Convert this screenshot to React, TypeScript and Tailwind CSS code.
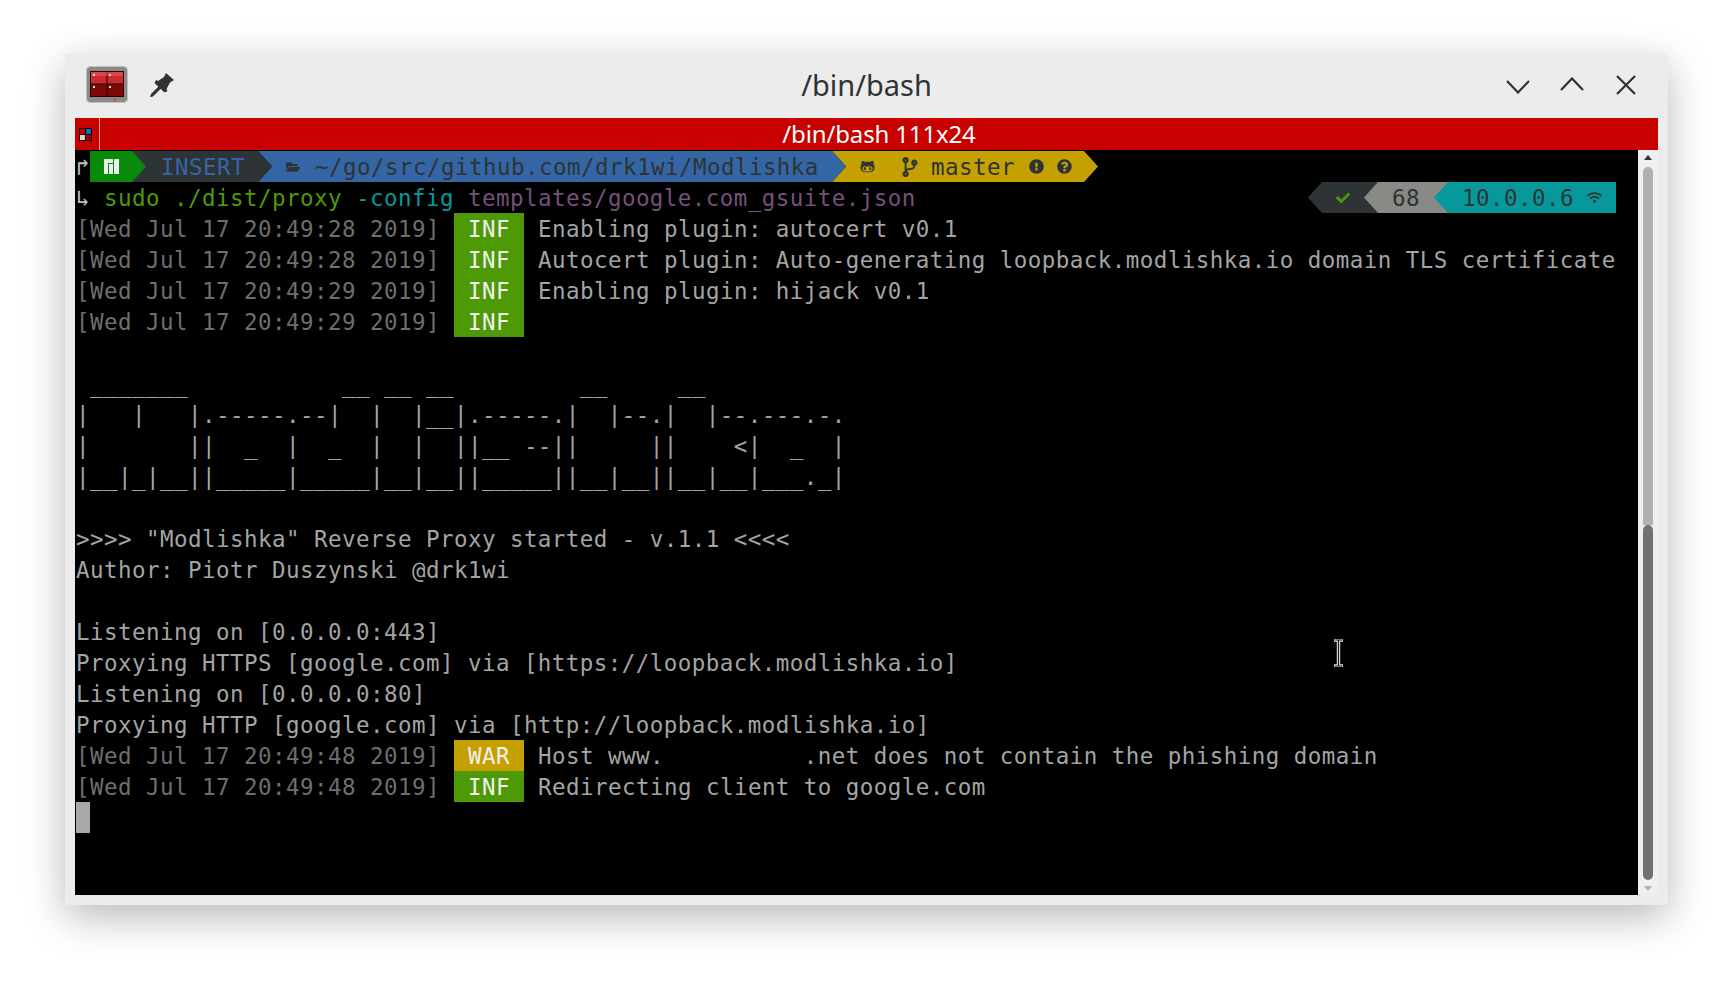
import React from "react";
import {
  FaCheck,
  FaCodeBranch,
  FaExclamationCircle,
  FaFolderOpen,
  FaGithubAlt,
  FaQuestionCircle,
  FaWifi,
} from "react-icons/fa";

const ART = [
  " _______           __ __ __         __     __",
  "|   |   |.-----.--|  |  |__|.-----.|  |--.|  |--.---.-.",
  "|       ||  _  |  _  |  |  ||__ --||     ||    <|  _  |",
  "|__|_|__||_____|_____|__|__||_____||__|__||__|__|___._|",
];

function Row({ children, className = "" }: { children?: React.ReactNode; className?: string }) {
  return <div className={`h-[31px] leading-[33px] whitespace-pre ${className}`}>{children}</div>;
}

function Log({ time, level = "INF", children }: { time: string; level?: string; children?: React.ReactNode }) {
  return (
    <Row>
      <span className="text-[#6e6e6e]">[Wed Jul 17 {time} 2019]</span>{" "}
      <span
        className={`inline-block h-[31px] w-[70px] text-center align-top text-[#f0f0f0] ${
          level === "WAR" ? "bg-[#c4a000]" : "bg-[#4e9a06]"
        }`}
      >
        {level}
      </span>{" "}
      {children}
    </Row>
  );
}

function AppIcon() {
  return (
    <svg width="42" height="38" viewBox="0 0 42 38">
      <rect x="0.5" y="0.5" width="41" height="36" rx="4" fill="#8a8a88" stroke="#c0c0be" />
      <rect x="4" y="5" width="34" height="26" fill="#2a0000" />
      <rect x="5" y="6" width="15.5" height="11.5" fill="#c92a2e" />
      <rect x="21.5" y="6" width="15.5" height="11.5" fill="#c92a2e" />
      <rect x="5" y="18.5" width="15.5" height="11.5" fill="#7c0808" />
      <rect x="21.5" y="18.5" width="15.5" height="11.5" fill="#7c0808" />
      <rect x="5" y="6" width="32" height="4" fill="#ff7a7a" opacity="0.35" />
      <rect x="7" y="8" width="2" height="2" fill="#ddd" />
      <rect x="23" y="8" width="2" height="2" fill="#ddd" />
      <rect x="7" y="20" width="2" height="2" fill="#ddd" />
      <rect x="23" y="20" width="2" height="2" fill="#ddd" />
      <rect x="28" y="32.5" width="2" height="2" fill="#e33" />
    </svg>
  );
}

export default function App() {
  return (
    <div className="h-[983px] w-[1733px] overflow-hidden bg-white pl-[65px] pt-[53px] font-['Noto_Sans',sans-serif]">
      <div className="h-[852px] w-[1603px] rounded-[4px] bg-[#ececec] px-[10px] shadow-[0_12px_40px_rgba(0,0,0,0.28)]">
        {/* Title bar */}
        <div className="relative flex h-[65px] items-center pb-[2px]">
          <div className="ml-[11px]">
            <AppIcon />
          </div>
          <svg className="ml-[22px]" width="24" height="24" viewBox="0 0 24 24" fill="#2e3436">
            <path d="M16 0 L24 7 L20 9.5 L16.5 16 L17.5 18 L14.5 19.5 L4.5 10 L6 7 L8 8 L14 4 Z" />
            <path d="M9 13 L1 21 L0 24 L3 23.5 L11 15.5 Z" />
          </svg>
          <span className="absolute left-0 right-0 text-center text-[29px] text-[#2e3436]">/bin/bash</span>
          <div className="ml-auto mr-[22px] flex items-center gap-[30px]">
            <svg width="24" height="14" viewBox="0 0 24 14" fill="none" stroke="#2e3436" strokeWidth="2.2" className="mt-[4px]">
              <path d="M1 1 L12 12.5 L23 1" />
            </svg>
            <svg width="24" height="14" viewBox="0 0 24 14" fill="none" stroke="#2e3436" strokeWidth="2.2" className="-mt-[1px]">
              <path d="M1 13 L12 1.5 L23 13" />
            </svg>
            <svg width="20" height="20" viewBox="0 0 20 20" fill="none" stroke="#2e3436" strokeWidth="2.2" className="ml-[2px]">
              <path d="M1 1 L19 19 M19 1 L1 19" />
            </svg>
          </div>
        </div>

        {/* Tab bar */}
        <div className="flex h-[32px] items-center bg-[#c80000]">
          <svg className="ml-[4px]" width="13" height="13" viewBox="0 0 13 13">
            <rect width="13" height="13" fill="#000" />
            <rect x="1" y="1" width="5" height="5" fill="#c80000" />
            <rect x="7" y="1" width="5" height="5" fill="#0a6fc4" />
            <rect x="1" y="7" width="5" height="5" fill="#d6d6d6" />
            <rect x="7" y="7" width="5" height="5" fill="#c80000" />
            <path d="M8 9 L12 9 L10 11 Z" fill="#000" />
          </svg>
          <div className="ml-[7px] h-full w-px bg-[#e8b0b0]" />
          <span className="flex-1 text-center text-[24px] leading-[32px] tracking-[-0.15px] text-white">/bin/bash 111x24</span>
        </div>

        {/* Terminal */}
        <div className="flex h-[745px]">
          <div className="relative w-[1563px] bg-black pl-px pt-px font-['DejaVu_Sans_Mono',monospace] text-[22.5px] tracking-[0.45px] text-[#a4a4a4]">
            <Row className="flex">
              <span className="w-[14px] text-[#c0c0c0]">↱</span>
              <div className="relative z-40 flex h-[31px] w-[56px] items-center bg-[#0a8a0a] pl-[14px] [clip-path:polygon(0_0,42px_0,100%_50%,42px_100%,0_100%)]">
                <svg width="15" height="15" viewBox="0 0 15 15" fill="#e8f0e8">
                  <path d="M0 0 H9 V4 H4 V15 H0 Z M5 5 H9 V15 H5 Z M10 0 H15 V15 H10 Z" />
                </svg>
              </div>
              <div className="relative z-30 -ml-[14px] h-[31px] w-[140px] bg-[#2e3436] pl-[29px] text-[#3465a4] [clip-path:polygon(0_0,126px_0,100%_50%,126px_100%,0_100%)]">
                INSERT
              </div>
              <div className="relative z-20 -ml-[14px] flex h-[31px] w-[588px] items-center bg-[#3465a4] pl-[28px] text-[#2e3436] [clip-path:polygon(0_0,574px_0,100%_50%,574px_100%,0_100%,14px_50%)]">
                <FaFolderOpen size={14} />
                <span className="ml-[15px] mt-[2px]">~/go/src/github.com/drk1wi/Modlishka</span>
              </div>
              <div className="relative z-10 -ml-[14px] flex h-[31px] w-[266px] items-center bg-[#c4a000] pl-[28px] text-[#2e3436] [clip-path:polygon(0_0,252px_0,100%_50%,252px_100%,0_100%,14px_50%)]">
                <FaGithubAlt size={15} />
                <FaCodeBranch size={20} className="ml-[25px]" />
                <span className="ml-[11px] mt-[2px]">master</span>
                <FaExclamationCircle size={15} className="ml-[14px]" />
                <FaQuestionCircle size={15} className="ml-[13px]" />
              </div>
            </Row>
            <Row className="flex">
              <span>
                <span className="text-[#c0c0c0]">↳</span> <span className="text-[#4e9a06]">sudo ./dist/proxy</span>{" "}
                <span className="text-[#06989a]">-config</span>{" "}
                <span className="text-[#75507b]">templates/google.com_gsuite.json</span>
              </span>
              <div className="ml-auto mr-[22px] flex text-[#2e3436]">
                <div className="flex h-[31px] w-[70px] items-center bg-[#2e3436] pl-[28px] text-[#4e9a06] [clip-path:polygon(14px_0,100%_0,100%_100%,14px_100%,0_50%)]">
                  <FaCheck size={14} />
                </div>
                <div className="relative -ml-[14px] h-[31px] w-[84px] bg-[#888a85] pl-[28px] [clip-path:polygon(14px_0,100%_0,100%_100%,14px_100%,0_50%)]">
                  68
                </div>
                <div className="relative -ml-[14px] flex h-[31px] w-[182px] items-center bg-[#06989a] pl-[28px] [clip-path:polygon(14px_0,100%_0,100%_100%,14px_100%,0_50%)]">
                  <span className="mt-[2px]">10.0.0.6</span>
                  <FaWifi size={15} className="ml-[13px]" />
                </div>
              </div>
            </Row>
            <Log time="20:49:28">Enabling plugin: autocert v0.1</Log>
            <Log time="20:49:28">Autocert plugin: Auto-generating loopback.modlishka.io domain TLS certificate</Log>
            <Log time="20:49:29">Enabling plugin: hijack v0.1</Log>
            <Log time="20:49:29" />
            <Row />
            {ART.map((line) => (
              <Row key={line}>{line}</Row>
            ))}
            <Row />
            <Row>{'>>>> "Modlishka" Reverse Proxy started - v.1.1 <<<<'}</Row>
            <Row>Author: Piotr Duszynski @drk1wi</Row>
            <Row />
            <Row>Listening on [0.0.0.0:443]</Row>
            <Row>Proxying HTTPS [google.com] via [https://loopback.modlishka.io]</Row>
            <Row>Listening on [0.0.0.0:80]</Row>
            <Row>Proxying HTTP [google.com] via [http://loopback.modlishka.io]</Row>
            <Log time="20:49:48" level="WAR">
              {"Host www.          .net does not contain the phishing domain"}
            </Log>
            <Log time="20:49:48">Redirecting client to google.com</Log>
            <Row>
              <span className="inline-block h-[31px] w-[14px] bg-[#a8a8a8] align-top" />
            </Row>

            {/* Mouse I-beam cursor */}
            <svg className="absolute left-[1258px] top-[489px]" width="11" height="28" viewBox="0 0 11 28" fill="none">
              <path d="M1 1 H10 M1 27 H10 M5.5 1 V27" stroke="#e8e8e8" strokeWidth="3.4" />
              <path d="M1.5 1 H9.5 M1.5 27 H9.5 M5.5 1 V27" stroke="#111" strokeWidth="1.2" />
            </svg>
          </div>

          {/* Scrollbar */}
          <div className="flex w-[20px] flex-col items-center bg-[#efefef]">
            <svg className="mt-[5px]" width="8" height="5" viewBox="0 0 8 5" fill="#2e3436">
              <path d="M0 5 L4 0 L8 5 Z" />
            </svg>
            <div className="mt-[7px] h-[358px] w-[10px] rounded-t-full bg-[#b0b0b0]" />
            <div className="h-[355px] w-[10px] rounded-full bg-[#6f7175]" />
            <svg className="mt-[6px]" width="8" height="5" viewBox="0 0 8 5" fill="#b0b0b0">
              <path d="M0 0 L8 0 L4 5 Z" />
            </svg>
          </div>
        </div>
      </div>
    </div>
  );
}
